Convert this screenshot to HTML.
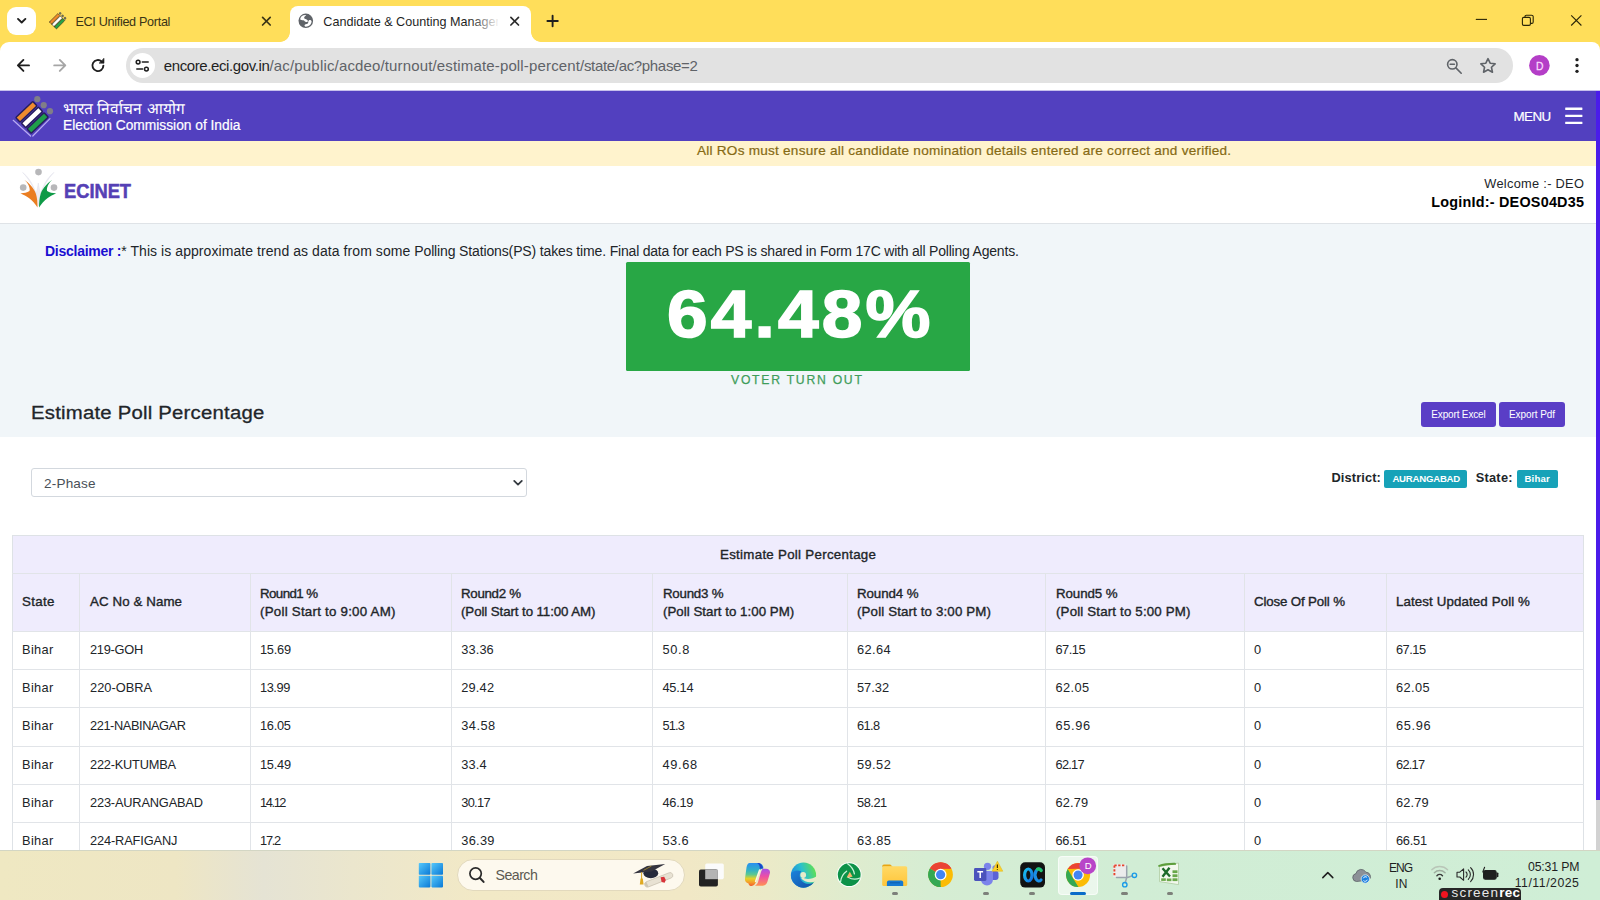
<!DOCTYPE html>
<html lang="en">
<head>
<meta charset="utf-8">
<title>Candidate &amp; Counting Management</title>
<style>
*{box-sizing:border-box;margin:0;padding:0}
html,body{width:1600px;height:900px;overflow:hidden;background:#fff;font-family:"Liberation Sans",sans-serif;color:#212529}
#root{position:relative;width:1600px;height:900px;overflow:hidden}
.a{position:absolute}
.t{position:absolute;white-space:nowrap}
svg{position:absolute;overflow:visible}
/* browser chrome */
#tabstrip{left:0;top:0;width:1600px;height:56px;background:#ffde5a}
#tabdrop{left:7px;top:7px;width:28.5px;height:27.8px;border-radius:9px;background:#fff}
#tab2{left:290.3px;top:6.1px;width:240.7px;height:36px;background:#fff;border-radius:8px 8px 0 0}
#tab2:before,#tab2:after{content:"";position:absolute;bottom:0;width:10px;height:10px}
#tab2:before{left:-10px;background:radial-gradient(circle at 0 0,rgba(255,255,255,0) 9.5px,#fff 10.2px)}
#tab2:after{right:-10px;background:radial-gradient(circle at 100% 0,rgba(255,255,255,0) 9.5px,#fff 10.2px)}
#toolbar{left:0;top:41.5px;width:1600px;height:48.5px;background:#fff;border-radius:9px 8px 0 0}
#omni{left:125.6px;top:48.1px;width:1387px;height:34.5px;border-radius:17.25px;background:#e2e2e2}
#sitebtn{left:130px;top:53px;width:25px;height:25px;border-radius:50%;background:#fff}
#chromeline{left:0;top:89.5px;width:1600px;height:1.5px;background:#c6c0ec}
#t2fade{left:470px;top:10px;width:30px;height:24px;background:linear-gradient(90deg,rgba(255,255,255,0),#fff)}
/* page */
#hdr{left:0;top:91px;width:1596px;height:50.4px;background:#5240bf}
#notice{left:0;top:141.4px;width:1596px;height:24.2px;background:#fff3cd}
#whitehdr{left:0;top:165.6px;width:1596px;height:58px;background:#fff;border-bottom:1px solid #dfe3e7}
#band{left:0;top:223.6px;width:1596px;height:213px;background:#f1f6f9}
#sbar{left:1596px;top:91px;width:4px;height:760px;background:#d2d2d2}
#sthumb{left:1596px;top:91px;width:4px;height:709px;background:#4a1cea}
#green{left:626px;top:262px;width:344px;height:108.5px;background:#28a745;border-radius:1.5px}
.btn{background:#5a3ec6;border-radius:3px;height:24.8px;top:401.8px}
.badge{background:#17a2b8;border-radius:2px;height:17.5px;top:470px}
#sel{left:31px;top:468.2px;width:495.8px;height:29px;border:1px solid #d3d8de;border-radius:3px;background:#fff}
/* table */
#tbl{left:12px;top:535px;width:1572px;height:316px;border:1px solid #dee2e6;border-bottom:0}
#thead{left:12.5px;top:535.5px;width:1571px;height:96px;background:#efecfd}
.hl{position:absolute;left:12px;width:1572px;height:1px;background:#e1e4e8}
.vl{position:absolute;top:573px;width:1px;height:278px;background:#e1e4e8}
.th{transform:scaleX(1.04);transform-origin:0 50%;font-weight:400;-webkit-text-stroke:0.35px #212529;font-size:12.8px;color:#212529}
.td{font-size:12.8px;color:#212529}
/* taskbar */
#taskbar{left:0;top:850.3px;width:1600px;height:50px;background:linear-gradient(90deg,#efe8c2 0%,#eee6c4 11%,#e5e3d4 16.500%,#ebe6cd 22%,#f2e9c6 30%,#f1e8c6 43%,#ebeac8 48%,#dfecce 53%,#d6edd3 58%,#d1edd5 70%,#cfeed6 100%);border-top:1px solid #d3d6c4}
#search{left:457px;top:858.6px;width:227.800px;height:32.600px;border-radius:16.300px;background:#fdf9ee;border:1px solid #e2d9bd}
#actv{left:1058.4px;top:855.6px;width:39.4px;height:39.4px;border-radius:4px;background:rgba(255,255,255,.55);border:1px solid rgba(255,255,255,.6)}
.dot{position:absolute;top:891.6px;width:6.4px;height:3px;border-radius:1.5px;background:#7d807a}
#srec{left:1439px;top:887.5px;width:82px;height:14px;border-radius:4px 4px 0 0;background:#262626}
</style>
</head>
<body>
<div id="root">
<!-- BROWSER CHROME -->
<div id="tabstrip" class="a"></div>
<div id="tabdrop" class="a"></div>
<div id="tab2" class="a"></div>
<div id="toolbar" class="a"></div>
<div id="omni" class="a"></div>
<div id="sitebtn" class="a"></div>
<div id="chromeline" class="a"></div>
<div class="t" style="top:14px;font-size:12.6px;line-height:17px;height:17px;left:75.40px;letter-spacing:-0.3px;color:#3a3416;">ECI Unified Portal</div>
<div class="t" style="top:14px;font-size:12.6px;line-height:17px;height:17px;left:323.30px;color:#1f1f1f;width:175px;overflow:hidden;">Candidate &amp; Counting Management</div>
<div id="t2fade" class="a"></div>
<div class="t" style="top:56px;font-size:15px;line-height:19px;height:19px;left:163.80px;color:#5f6368;"><span style="color:#1f1f1f;letter-spacing:-0.394px">encore.eci.gov.in</span><span style="letter-spacing:0.183px">/ac/public</span><span style="letter-spacing:0.143px">/acdeo/turnout</span><span style="letter-spacing:0.153px">/estimate-poll-percent</span><span style="letter-spacing:-0.330px">/state/ac?phase=2</span></div>
<svg class="a" style="left:0;top:0" width="1600" height="91" viewBox="0 0 1600 91" fill="none" stroke-linecap="round" stroke-linejoin="round">
<!-- tab dropdown chevron -->
<path d="M18 18.900 L21.700 22.500 L25.400 18.900" stroke="#1f1f1f" stroke-width="1.900"/>
<!-- ECI favicon -->
<g transform="translate(57.6 20.8) rotate(-45) scale(.88)">
<rect x="-7.5" y="-5.6" width="13.5" height="3.4" rx=".5" fill="#f08a2b" stroke="#3c2f1a" stroke-width=".7"/>
<rect x="-7.5" y="-1.7" width="13.5" height="3.4" rx=".5" fill="#fff" stroke="#3c2f1a" stroke-width=".7"/>
<rect x="-7.5" y="2.2" width="13.5" height="3.4" rx=".5" fill="#27a348" stroke="#3c2f1a" stroke-width=".7"/>
<circle cx="8" cy="-3.9" r="1.5" fill="#6e6a52"/><circle cx="8" cy="0" r="1.5" fill="#6e6a52"/><circle cx="8" cy="3.9" r="1.5" fill="#6e6a52"/>
</g>
<!-- tab close buttons -->
<path d="M262.6 17.4 l7.6 7.6 m0 -7.6 l-7.6 7.6" stroke="#3a3416" stroke-width="1.7"/>
<path d="M510.9 17.4 l7.6 7.6 m0 -7.6 l-7.6 7.6" stroke="#2b2b2b" stroke-width="1.7"/>
<!-- new tab plus -->
<path d="M547.4 21 h10.4 M552.6 15.8 v10.4" stroke="#1f1f1f" stroke-width="1.9"/>
<!-- globe favicon -->
<g transform="translate(305.8 20.8)"><circle r="7.3" fill="#5f6368"/>
<path d="M-5.7 -1.5 C-5.3 -4.6 -2.5 -6.1 .5 -5.7 C-.5 -4.6 -1.8 -4 -1.6 -2.8 C-1.4 -1.6 .8 -1.8 1.8 -.6 C2.6 .4 1.6 1.5 .4 1.3 C-1 1.100 -1.200 -.3 -2.600 -.5 C-3.800 -.7 -4.900 -.5 -5.700 -1.500Z" fill="#fff"/>
<path d="M5.800 .5 C5.600 3.900 3 6 -.2 5.900 C-1.300 5.800 -1.700 4.600 -.8 3.800 C0 3 1.600 3.400 2.200 2.400 C2.800 1.400 2 .4 3 -.4 C4 -1.200 5.300 -.6 5.800 .5Z" fill="#fff"/></g>
<!-- back -->
<path d="M29 65.4 H18.2 M23.4 59.9 L17.9 65.4 L23.4 70.9" stroke="#1f1f1f" stroke-width="1.9"/>
<!-- forward (disabled) -->
<path d="M54.2 65.4 H65 M59.8 59.9 L65.3 65.4 L59.8 70.9" stroke="#a6a6a6" stroke-width="1.9"/>
<!-- reload -->
<path d="M103.4 65.6 a5.5 5.5 0 1 1 -1.7 -4" stroke="#1f1f1f" stroke-width="1.9"/>
<path d="M104 58.6 v4.6 h-4.6z" fill="#1f1f1f" stroke="#1f1f1f" stroke-width=".6"/>
<!-- site settings (tune) -->
<g stroke="#1f1f1f" stroke-width="1.5">
<circle cx="138.1" cy="62.1" r="1.9"/><path d="M142.3 62.1 H148.2"/>
<path d="M136.8 69.1 H142.6"/><circle cx="146.4" cy="69.1" r="1.9"/>
</g>
<!-- zoom-out indicator -->
<g stroke="#5f6368" stroke-width="1.6">
<circle cx="1452.3" cy="64.3" r="4.7"/><path d="M1455.9 67.9 L1461.2 73.2"/><path d="M1450.2 64.3 h4.2"/>
</g>
<!-- bookmark star -->
<path d="M1488 58.6 l2.15 4.6 l5.0 .6 l-3.7 3.45 l1 4.95 l-4.45 -2.45 l-4.45 2.45 l1 -4.95 l-3.7 -3.45 l5.0 -.6z" stroke="#5f6368" stroke-width="1.6"/>
<!-- profile -->
<circle cx="1539.4" cy="65.4" r="10.3" fill="#b43ec7"/>
<!-- kebab -->
<g fill="#1f1f1f"><circle cx="1577" cy="59.700" r="1.650"/><circle cx="1577" cy="65.500" r="1.650"/><circle cx="1577" cy="71.300" r="1.650"/></g>
<!-- window controls -->
<g stroke="#2a2508" stroke-width="1.1" stroke-linecap="butt">
<path d="M1475.8 19.4 H1487"/>
<rect x="1522.4" y="17.4" width="8" height="8" rx="1.3"/>
<path d="M1525 17.2 v-.6 a1.4 1.4 0 0 1 1.4 -1.4 h5.2 a1.6 1.6 0 0 1 1.6 1.6 v5.2 a1.4 1.4 0 0 1 -1.4 1.4 h-.8"/>
<path d="M1571.2 15.3 L1581.4 25.5 M1581.4 15.3 L1571.2 25.5"/>
</g>
</svg>
<div class="t" style="top:58px;font-size:11.5px;line-height:16px;height:16px;left:1535.90px;color:#f9dcfc;-webkit-text-stroke:.3px #f9dcfc;transform:scaleX(.9);transform-origin:0 50%;">D</div>
<!-- PAGE HEADER -->
<div id="hdr" class="a"></div>
<div id="notice" class="a"></div>
<div id="whitehdr" class="a"></div>
<div id="band" class="a"></div>
<div id="sbar" class="a"></div>
<div id="sthumb" class="a"></div>
<svg class="a" style="left:0;top:91px" width="1596" height="140" viewBox="0 91 1596 140" fill="none">
<!-- ECI logo -->
<g stroke="#b9aaf2" stroke-width="1.2" stroke-linecap="round"><path d="M13.2 120.3 L30.6 136"/><path d="M32.8 136 L50 118.6"/></g>
<g transform="translate(32 117.4) rotate(-43.5)">
<rect x="-11.9" y="-11" width="23.4" height="6.1" rx=".8" fill="#ef8b2e" stroke="#261d5c" stroke-width="1.5"/>
<rect x="-11.7" y="-3.050" width="23.4" height="6.1" rx=".8" fill="#ffffff" stroke="#261d5c" stroke-width="1.5"/>
<rect x="-11.5" y="4.900" width="23.4" height="6.1" rx=".8" fill="#1f9e4a" stroke="#261d5c" stroke-width="1.5"/>
</g>
<circle cx="37.3" cy="99.2" r="3.1" fill="#807e88"/><circle cx="43.7" cy="105.2" r="3.1" fill="#807e88"/><circle cx="50" cy="111.2" r="3.1" fill="#807e88"/>
<!-- hamburger -->
<g fill="#fff"><rect x="1565.2" y="107.6" width="17.2" height="2.3" rx=".3"/><rect x="1565.2" y="114.8" width="17.2" height="2.3" rx=".3"/><rect x="1565.2" y="121.7" width="17.2" height="2.3" rx=".3"/></g>
<!-- ECINET logo -->
<path d="M38.3 206 C37.6 196 33 180 22.6 172.4 C29.5 179.5 33.4 187.5 36.2 193.5 C37.2 190 37.8 186 38.3 183 C38.8 186 39.4 190 40.4 193.5 C43.2 187.5 47.1 179.5 54 172.4 C43.6 180 39 196 38.3 206Z" fill="#ededf3" stroke="#e1e1ea" stroke-width=".5"/>
<path d="M24.4 180.1 C28.5 182.5 33.5 187.5 35.9 193.7 C37.2 198 37.6 203 37.5 207.6 C36 204.5 32 200.5 28.9 198 C26.5 196.3 23.6 194.8 20.4 193.2 C23 193.4 27 192.6 29.5 191 C30.3 189 29 186 27.9 184.1 C27 182.6 25.8 181.2 24.4 180.1Z" fill="#ea7e22"/>
<path d="M52.2 180.1 C48.1 182.5 43.1 187.5 40.7 193.7 C39.4 198 39 203 39.1 207.6 C40.6 204.5 44.6 200.5 47.7 198 C50.1 196.3 53 194.8 56.2 193.2 C53.6 193.4 49.6 192.6 47.1 191 C46.3 189 47.600 186 48.700 184.1 C49.600 182.600 50.800 181.200 52.200 180.100Z" fill="#0f9a47"/>
<circle cx="38.5" cy="172.1" r="3.3" fill="#b7b7b9"/><circle cx="23.2" cy="187.6" r="3.3" fill="#b7b7b9"/><circle cx="54" cy="187.6" r="3.3" fill="#b7b7b9"/>
</svg>
<div class="t" style="top:99px;font-size:15.5px;line-height:20px;height:20px;left:63.00px;color:#fff;font-family:"Liberation Sans","Noto Sans Devanagari","Lohit Devanagari",sans-serif;">भारत निर्वाचन आयोग</div>
<div class="t" style="top:117px;font-size:13.8px;line-height:18px;height:18px;left:63.00px;letter-spacing:-0.02px;color:#fff;-webkit-text-stroke:.2px #fff;">Election Commission of India</div>
<div class="t" style="top:108px;font-size:13.4px;line-height:18px;height:18px;left:1513.50px;letter-spacing:-0.58px;color:#fff;-webkit-text-stroke:.2px #fff;">MENU</div>
<div class="t" style="top:142px;font-size:12.8px;line-height:17px;height:17px;left:697.00px;letter-spacing:0.229px;color:#866a14;transform:scaleX(1.06);transform-origin:0 50%;-webkit-text-stroke:.2px #866a14;">All ROs must ensure all candidate nomination details entered are correct and verified.</div>
<div class="t" style="top:178px;font-size:21px;line-height:25px;height:25px;left:64.00px;font-weight:700;color:#5540b5;transform:scaleX(.87);transform-origin:0 50%;-webkit-text-stroke:.55px #5540b5;">ECINET</div>
<div class="t" style="top:175px;font-size:12.8px;line-height:17px;height:17px;right:15.80px;letter-spacing:0.3px;">Welcome :- DEO</div>
<div class="t" style="top:193px;font-size:14.4px;line-height:19px;height:19px;right:15.80px;font-weight:700;letter-spacing:0.225px;color:#000;">LoginId:- DEOS04D35</div>
<!-- SUMMARY BAND -->
<div class="t" style="top:242px;font-size:14px;line-height:18px;height:18px;left:45.00px;"><b style="color:#1a0fd1;letter-spacing:-0.264px">Disclaimer :</b><span style="letter-spacing:0.067px">* This is approximate trend as data from some </span><span style="letter-spacing:-0.136px">Polling Stations(PS) takes time. </span><span style="letter-spacing:-0.218px">Final data for each PS is </span><span style="letter-spacing:-0.205px">shared in Form 17C with all Polling Agents.</span></div>
<div id="green" class="a"></div>
<div class="t" style="top:279px;font-size:66.4px;line-height:71px;height:71px;left:666.50px;font-weight:700;letter-spacing:2.85px;color:#fff;transform:scaleX(1.1);transform-origin:0 50%;-webkit-text-stroke:1.6px #fff;">64.48%</div>
<div class="t" style="top:372px;font-size:12.2px;line-height:17px;height:17px;left:731.00px;letter-spacing:1.75px;color:#3f9d5b;-webkit-text-stroke:.25px #3f9d5b;">VOTER TURN OUT</div>
<div class="t" style="top:401px;font-size:19.2px;line-height:24px;height:24px;left:31.00px;letter-spacing:0.2px;transform:scaleX(1.06);transform-origin:0 50%;-webkit-text-stroke:.3px #212529;">Estimate Poll Percentage</div>
<div class="a btn" style="left:1421px;width:75px"></div>
<div class="a btn" style="left:1499px;width:66px"></div>
<div class="t" style="top:408px;font-size:10px;line-height:14px;height:14px;left:1431.30px;letter-spacing:-0.158px;color:#fff;">Export Excel</div>
<div class="t" style="top:408px;font-size:10px;line-height:14px;height:14px;left:1509.00px;letter-spacing:-0.077px;color:#fff;">Export Pdf</div>
<!-- FILTER ROW -->
<div id="sel" class="a"></div>
<div class="t" style="top:475px;font-size:12.8px;line-height:17px;height:17px;left:43.50px;letter-spacing:0.167px;color:#495057;transform:scaleX(1.06);transform-origin:0 50%;">2-Phase</div>
<svg class="a" style="left:512px;top:478px" width="12" height="10" viewBox="0 0 12 10" fill="none"><path d="M2.2 2.9 L6 6.6 L9.8 2.9" stroke="#343a40" stroke-width="1.8" stroke-linecap="round" stroke-linejoin="round"/></svg>
<div class="t" style="top:469px;font-size:12.8px;line-height:17px;height:17px;left:1331.50px;font-weight:700;letter-spacing:0.127px;">District:</div>
<div class="a badge" style="left:1384px;width:83.3px"></div>
<div class="t" style="top:472px;font-size:9.6px;line-height:14px;height:14px;left:1392.40px;font-weight:700;letter-spacing:-0.22px;color:#fff;">AURANGABAD</div>
<div class="t" style="top:469px;font-size:12.8px;line-height:17px;height:17px;left:1475.70px;font-weight:700;letter-spacing:0.256px;">State:</div>
<div class="a badge" style="left:1517px;width:40.5px"></div>
<div class="t" style="top:472px;font-size:9.6px;line-height:14px;height:14px;left:1524.40px;font-weight:700;letter-spacing:0.214px;color:#fff;">Bihar</div>
<!-- TABLE -->
<div id="thead" class="a"></div>
<div id="tbl" class="a"></div>
<div class="vl" style="left:79.00px"></div>
<div class="vl" style="left:250.00px"></div>
<div class="vl" style="left:451.25px"></div>
<div class="vl" style="left:652.00px"></div>
<div class="vl" style="left:846.50px"></div>
<div class="vl" style="left:1044.50px"></div>
<div class="vl" style="left:1243.50px"></div>
<div class="vl" style="left:1385.50px"></div>
<div class="hl" style="top:572.50px"></div>
<div class="hl" style="top:630.75px"></div>
<div class="hl" style="top:669.00px"></div>
<div class="hl" style="top:707.25px"></div>
<div class="hl" style="top:745.50px"></div>
<div class="hl" style="top:783.75px"></div>
<div class="hl" style="top:822.00px"></div>
<div class="t th" style="top:546px;font-size:12.8px;line-height:17px;height:17px;left:720.00px;letter-spacing:0.273px;">Estimate Poll Percentage</div>
<div class="t th" style="top:593px;font-size:12.8px;line-height:17px;height:17px;left:22.00px;letter-spacing:0.341px;">State</div>
<div class="t th" style="top:593px;font-size:12.8px;line-height:17px;height:17px;left:90.00px;letter-spacing:0.088px;">AC No &amp; Name</div>
<div class="t th" style="top:585px;font-size:12.8px;line-height:17px;height:17px;left:260.00px;letter-spacing:-0.572px;">Round1 %</div>
<div class="t th" style="top:603px;font-size:12.8px;line-height:17px;height:17px;left:260.00px;letter-spacing:0.232px;">(Poll Start to 9:00 AM)</div>
<div class="t th" style="top:585px;font-size:12.8px;line-height:17px;height:17px;left:461.25px;letter-spacing:-0.298px;">Round2 %</div>
<div class="t th" style="top:603px;font-size:12.8px;line-height:17px;height:17px;left:461.25px;letter-spacing:-0.088px;">(Poll Start to 11:00 AM)</div>
<div class="t th" style="top:585px;font-size:12.8px;line-height:17px;height:17px;left:662.50px;letter-spacing:-0.229px;">Round3 %</div>
<div class="t th" style="top:603px;font-size:12.8px;line-height:17px;height:17px;left:662.50px;letter-spacing:0.013px;">(Poll Start to 1:00 PM)</div>
<div class="t th" style="top:585px;font-size:12.8px;line-height:17px;height:17px;left:857.00px;letter-spacing:-0.091px;">Round4 %</div>
<div class="t th" style="top:603px;font-size:12.8px;line-height:17px;height:17px;left:857.00px;letter-spacing:0.133px;">(Poll Start to 3:00 PM)</div>
<div class="t th" style="top:585px;font-size:12.8px;line-height:17px;height:17px;left:1055.50px;letter-spacing:-0.091px;">Round5 %</div>
<div class="t th" style="top:603px;font-size:12.8px;line-height:17px;height:17px;left:1055.50px;letter-spacing:0.155px;">(Poll Start to 5:00 PM)</div>
<div class="t th" style="top:593px;font-size:12.8px;line-height:17px;height:17px;left:1254.00px;letter-spacing:-0.152px;">Close Of Poll %</div>
<div class="t th" style="top:593px;font-size:12.8px;line-height:17px;height:17px;left:1396.00px;letter-spacing:0.109px;">Latest Updated Poll %</div>
<div class="t td" style="top:641px;font-size:12.8px;line-height:17px;height:17px;left:22.00px;letter-spacing:0.342px;">Bihar</div>
<div class="t td" style="top:641px;font-size:12.8px;line-height:17px;height:17px;left:90.00px;letter-spacing:-0.254px;">219-GOH</div>
<div class="t td" style="top:641px;font-size:12.8px;line-height:17px;height:17px;left:260.00px;letter-spacing:-0.245px;">15.69</div>
<div class="t td" style="top:641px;font-size:12.8px;line-height:17px;height:17px;left:461.25px;letter-spacing:0.117px;">33.36</div>
<div class="t td" style="top:641px;font-size:12.8px;line-height:17px;height:17px;left:662.50px;letter-spacing:0.612px;">50.8</div>
<div class="t td" style="top:641px;font-size:12.8px;line-height:17px;height:17px;left:857.00px;letter-spacing:0.417px;">62.64</div>
<div class="t td" style="top:641px;font-size:12.8px;line-height:17px;height:17px;left:1055.50px;letter-spacing:-0.495px;">67.15</div>
<div class="t td" style="top:641px;font-size:12.8px;line-height:17px;height:17px;left:1254.00px;">0</div>
<div class="t td" style="top:641px;font-size:12.8px;line-height:17px;height:17px;left:1396.00px;letter-spacing:-0.495px;">67.15</div>
<div class="t td" style="top:679px;font-size:12.8px;line-height:17px;height:17px;left:22.00px;letter-spacing:0.342px;">Bihar</div>
<div class="t td" style="top:679px;font-size:12.8px;line-height:17px;height:17px;left:90.00px;letter-spacing:0.015px;">220-OBRA</div>
<div class="t td" style="top:679px;font-size:12.8px;line-height:17px;height:17px;left:260.00px;letter-spacing:-0.433px;">13.99</div>
<div class="t td" style="top:679px;font-size:12.8px;line-height:17px;height:17px;left:461.25px;letter-spacing:0.192px;">29.42</div>
<div class="t td" style="top:679px;font-size:12.8px;line-height:17px;height:17px;left:662.50px;letter-spacing:-0.245px;">45.14</div>
<div class="t td" style="top:679px;font-size:12.8px;line-height:17px;height:17px;left:857.00px;letter-spacing:0.005px;">57.32</div>
<div class="t td" style="top:679px;font-size:12.8px;line-height:17px;height:17px;left:1055.50px;letter-spacing:0.417px;">62.05</div>
<div class="t td" style="top:679px;font-size:12.8px;line-height:17px;height:17px;left:1254.00px;">0</div>
<div class="t td" style="top:679px;font-size:12.8px;line-height:17px;height:17px;left:1396.00px;letter-spacing:0.417px;">62.05</div>
<div class="t td" style="top:717px;font-size:12.8px;line-height:17px;height:17px;left:22.00px;letter-spacing:0.342px;">Bihar</div>
<div class="t td" style="top:717px;font-size:12.8px;line-height:17px;height:17px;left:90.00px;letter-spacing:-0.418px;">221-NABINAGAR</div>
<div class="t td" style="top:717px;font-size:12.8px;line-height:17px;height:17px;left:260.00px;letter-spacing:-0.258px;">16.05</div>
<div class="t td" style="top:717px;font-size:12.8px;line-height:17px;height:17px;left:461.25px;letter-spacing:0.492px;">34.58</div>
<div class="t td" style="top:717px;font-size:12.8px;line-height:17px;height:17px;left:662.50px;letter-spacing:-0.821px;">51.3</div>
<div class="t td" style="top:717px;font-size:12.8px;line-height:17px;height:17px;left:857.00px;letter-spacing:-0.588px;">61.8</div>
<div class="t td" style="top:717px;font-size:12.8px;line-height:17px;height:17px;left:1055.50px;letter-spacing:0.655px;">65.96</div>
<div class="t td" style="top:717px;font-size:12.8px;line-height:17px;height:17px;left:1254.00px;">0</div>
<div class="t td" style="top:717px;font-size:12.8px;line-height:17px;height:17px;left:1396.00px;letter-spacing:0.655px;">65.96</div>
<div class="t td" style="top:756px;font-size:12.8px;line-height:17px;height:17px;left:22.00px;letter-spacing:0.342px;">Bihar</div>
<div class="t td" style="top:756px;font-size:12.8px;line-height:17px;height:17px;left:90.00px;letter-spacing:-0.22px;">222-KUTUMBA</div>
<div class="t td" style="top:756px;font-size:12.8px;line-height:17px;height:17px;left:260.00px;letter-spacing:-0.245px;">15.49</div>
<div class="t td" style="top:756px;font-size:12.8px;line-height:17px;height:17px;left:461.25px;letter-spacing:0.129px;">33.4</div>
<div class="t td" style="top:756px;font-size:12.8px;line-height:17px;height:17px;left:662.50px;letter-spacing:0.655px;">49.68</div>
<div class="t td" style="top:756px;font-size:12.8px;line-height:17px;height:17px;left:857.00px;letter-spacing:0.442px;">59.52</div>
<div class="t td" style="top:756px;font-size:12.8px;line-height:17px;height:17px;left:1055.50px;letter-spacing:-0.733px;">62.17</div>
<div class="t td" style="top:756px;font-size:12.8px;line-height:17px;height:17px;left:1254.00px;">0</div>
<div class="t td" style="top:756px;font-size:12.8px;line-height:17px;height:17px;left:1396.00px;letter-spacing:-0.733px;">62.17</div>
<div class="t td" style="top:794px;font-size:12.8px;line-height:17px;height:17px;left:22.00px;letter-spacing:0.342px;">Bihar</div>
<div class="t td" style="top:794px;font-size:12.8px;line-height:17px;height:17px;left:90.00px;letter-spacing:-0.172px;">223-AURANGABAD</div>
<div class="t td" style="top:794px;font-size:12.8px;line-height:17px;height:17px;left:260.00px;letter-spacing:-1.383px;">14.12</div>
<div class="t td" style="top:794px;font-size:12.8px;line-height:17px;height:17px;left:461.25px;letter-spacing:-0.695px;">30.17</div>
<div class="t td" style="top:794px;font-size:12.8px;line-height:17px;height:17px;left:662.50px;letter-spacing:-0.258px;">46.19</div>
<div class="t td" style="top:794px;font-size:12.8px;line-height:17px;height:17px;left:857.00px;letter-spacing:-0.458px;">58.21</div>
<div class="t td" style="top:794px;font-size:12.8px;line-height:17px;height:17px;left:1055.50px;letter-spacing:0.167px;">62.79</div>
<div class="t td" style="top:794px;font-size:12.8px;line-height:17px;height:17px;left:1254.00px;">0</div>
<div class="t td" style="top:794px;font-size:12.8px;line-height:17px;height:17px;left:1396.00px;letter-spacing:0.167px;">62.79</div>
<div class="t td" style="top:832px;font-size:12.8px;line-height:17px;height:17px;left:22.00px;letter-spacing:0.342px;">Bihar</div>
<div class="t td" style="top:832px;font-size:12.8px;line-height:17px;height:17px;left:90.00px;letter-spacing:-0.128px;">224-RAFIGANJ</div>
<div class="t td" style="top:832px;font-size:12.8px;line-height:17px;height:17px;left:260.00px;letter-spacing:-1.238px;">17.2</div>
<div class="t td" style="top:832px;font-size:12.8px;line-height:17px;height:17px;left:461.25px;letter-spacing:0.292px;">36.39</div>
<div class="t td" style="top:832px;font-size:12.8px;line-height:17px;height:17px;left:662.50px;letter-spacing:0.379px;">53.6</div>
<div class="t td" style="top:832px;font-size:12.8px;line-height:17px;height:17px;left:857.00px;letter-spacing:0.492px;">63.85</div>
<div class="t td" style="top:832px;font-size:12.8px;line-height:17px;height:17px;left:1055.50px;letter-spacing:-0.245px;">66.51</div>
<div class="t td" style="top:832px;font-size:12.8px;line-height:17px;height:17px;left:1254.00px;">0</div>
<div class="t td" style="top:832px;font-size:12.8px;line-height:17px;height:17px;left:1396.00px;letter-spacing:-0.245px;">66.51</div>
<!-- TASKBAR -->
<div id="taskbar" class="a"></div>
<div id="search" class="a"></div>
<div id="actv" class="a"></div>
<div class="dot" style="left:892.0px"></div>
<div class="dot" style="left:983.0px"></div>
<div class="dot" style="left:1029.0px"></div>
<div class="dot" style="left:1121.2px"></div>
<div class="dot" style="left:1167.0px"></div>
<div class="a" style="left:1070px;top:891.8px;width:16.2px;height:3px;border-radius:1.5px;background:#0a6cc9"></div>
<svg class="a" style="left:0;top:851px" width="1600" height="49" viewBox="0 851 1600 49" fill="none">
<defs>
<linearGradient id="gw" x1="0" y1="0" x2="1" y2="1"><stop offset="0" stop-color="#55c8fb"/><stop offset="1" stop-color="#0a79d6"/></linearGradient>
<linearGradient id="gcl" x1="0" y1="0" x2="0" y2="1"><stop offset="0" stop-color="#2a8ff0"/><stop offset=".3" stop-color="#30b0c8"/><stop offset=".5" stop-color="#5cc890"/><stop offset=".68" stop-color="#e6d228"/><stop offset=".85" stop-color="#f59a2c"/><stop offset="1" stop-color="#f25a2c"/></linearGradient>
<linearGradient id="gcr" x1="0" y1="0" x2="0" y2="1"><stop offset="0" stop-color="#a850e8"/><stop offset=".45" stop-color="#ee4fa4"/><stop offset="1" stop-color="#ff9252"/></linearGradient>
<linearGradient id="ged" x1="0" y1=".6" x2="1" y2=".25"><stop offset="0" stop-color="#1a86e0"/><stop offset=".5" stop-color="#2cc0cc"/><stop offset="1" stop-color="#62e24a"/></linearGradient><linearGradient id="ged2" x1="0" y1="0" x2="1" y2="1"><stop offset="0" stop-color="#1b84dc"/><stop offset="1" stop-color="#134fa6"/></linearGradient>
<linearGradient id="gfo" x1="0" y1="0" x2="0" y2="1"><stop offset="0" stop-color="#ffd964"/><stop offset="1" stop-color="#ffc53a"/></linearGradient>
<linearGradient id="gwx" x1="0" y1="0" x2="1" y2="1"><stop offset="0" stop-color="#19c0f0"/><stop offset="1" stop-color="#1570e0"/></linearGradient>
</defs>
<!-- start -->
<g fill="url(#gw)"><rect x="418.8" y="863" width="11.6" height="11.7" rx=".8"/><rect x="431.4" y="863" width="11.6" height="11.7" rx=".8"/><rect x="418.8" y="875.7" width="11.6" height="11.7" rx=".8"/><rect x="431.4" y="875.7" width="11.6" height="11.7" rx=".8"/></g>
<!-- search magnifier -->
<circle cx="475.6" cy="873.6" r="5.7" stroke="#2a2a2a" stroke-width="1.7"/><path d="M479.9 878 L483.6 881.9" stroke="#2a2a2a" stroke-width="2" stroke-linecap="round"/>
<!-- graduation cap + scroll -->
<path d="M646.400 881.700 l22.600 -8.900 a2.800 2.800 0 0 1 2.100 5.200 l-22.600 8.900 a2.800 2.800 0 0 1 -2.100 -5.200z" fill="#e8e2d3" stroke="#bdb5a2" stroke-width=".6"/>
<path d="M647 887 a2.800 2.800 0 0 1 -.6 -5.300 l2.200 5.200z" fill="#cfc7b3"/>
<path d="M660.600 877.300 l3.600 -.6 l1.600 3.400 l-1.200 2.600 l-3 -.8z" fill="#d8343a"/>
<ellipse cx="650.800" cy="873.300" rx="7.400" ry="4.900" fill="#252a3b"/>
<path d="M633.100 873.400 L647 866 L665.200 864 L651.500 871.600z" fill="#34343f"/>
<path d="M643.500 870.400 l8 -4.400" stroke="#b99a2a" stroke-width=".7"/>
<path d="M641.600 872.300 v7" stroke="#d9a520" stroke-width="1"/><path d="M640.600 878.600 h2.200 l.8 5.800 h-3.800z" fill="#e0aa22"/>
<!-- task view -->
<rect x="705.2" y="863.4" width="18.6" height="15.8" rx="1.6" fill="#fbfbfb"/>
<rect x="699" y="869.6" width="18.9" height="16.9" rx="1.8" fill="#222"/>
<rect x="705.2" y="869.6" width="12.7" height="9.6" fill="#b4b4b4"/>
<!-- copilot -->
<path d="M749.800 863 h8.200 c3.400 0 5.600 2.400 5.400 5.600 c-2.400 .2 -3.800 1.600 -4.500 3.800 l-2.500 8.600 c-.5 1.800 -1.500 3.400 -3.300 4.600 c-1.800 1 -4.200 .2 -4.600 -2.200 c-2.400 -.4 -3.900 -2.200 -3.500 -4.800 l1.500 -11 c.4 -2.800 1.500 -4.600 3.300 -4.600z" fill="url(#gcl)"/>
<path d="M759.700 868.800 c.3 -2.600 -.6 -4.800 -2.600 -5.800 c3.200 -.2 5.600 1.800 5.900 5.500z" fill="#1c46c8"/>
<path d="M762.600 868.800 h3.400 c3 0 4.600 2 3.800 4.800 l-2.400 8.200 c-.8 2.600 -2.600 4 -5.200 4 h-7.400 c1.800 -.8 2.800 -2.200 3.400 -4.200 l2.400 -8.400 c.5 -2 1.600 -3.400 2 -4.400z" fill="url(#gcr)"/>
<path d="M759.600 870 L755.600 881.400" stroke="#fff6e6" stroke-width="1.500" stroke-linecap="round"/>
<!-- edge -->
<circle cx="803.500" cy="875.200" r="12.600" fill="url(#ged)"/>
<path d="M791 874 A12.600 12.600 0 0 0 813.800 882.400 C809 885.200 802 884 800 877.800 C799.300 875.400 799.800 873 801.200 871.200 C797 869.600 792.200 870.800 791 874Z" fill="url(#ged2)"/>
<circle cx="803.200" cy="875" r="2.900" fill="#e7ebca"/>
<path d="M802.600 877.600 C806 879.600 811.500 879.600 817.500 876 L816.500 881 C811 883.400 804.500 882.400 801.200 878.600Z" fill="#e7ebca"/>
<!-- green aperture app -->
<circle cx="849.2" cy="874.7" r="12.4" fill="#fbfffb"/><circle cx="849.2" cy="874.7" r="11.4" fill="#0c9248"/>
<g stroke="#c9f3d6" stroke-width="1.3" stroke-linecap="round"><path d="M847.6 863.8 c3 2 6 6 6.8 10"/><path d="M860 878 c-3.600 1.600 -8.600 1.200 -12 -.8"/><path d="M840.6 881.600 c.4 -3.800 2.600 -8 6 -10.400"/></g>
<path d="M846.600 877.400 l3.200 -5.600 l2.800 5z" fill="#f7b36a"/>
<!-- file explorer -->
<path d="M882.200 866.200 a1.800 1.800 0 0 1 1.800 -1.800 h6.200 l2.600 2.400 h-10.600z" fill="#e9a513"/>
<rect x="882.200" y="866.200" width="25" height="19.800" rx="1.600" fill="url(#gfo)"/>
<path d="M886.900 886 v-3.600 a2 2 0 0 1 2 -2 h12.300 a2 2 0 0 1 2 2 v3.600z" fill="#1579d3"/>
<path d="M890 882.800 h10" stroke="#0f5fae" stroke-width="1"/>
<!-- chrome -->
<g transform="translate(940.600 874.700)">
<circle r="12.300" fill="#fbbc05"/>
<path d="M0 0 L-10.650 -6.150 A12.300 12.300 0 0 1 10.650 -6.150z" fill="#ea4335"/>
<path d="M0 0 L-10.650 -6.150 A12.300 12.300 0 0 0 0 12.300z" fill="#34a853"/>
<path d="M0 -6 H11 L5 6z" fill="#fbbc05"/><path d="M0 -6.200 L10.700 -6.150 A12.300 12.300 0 0 0 -10.650 -6.150z" fill="#ea4335"/>
<path d="M-5.300 3.100 L0.300 12.300 A12.300 12.300 0 0 1 -10.650 -6.150z" fill="#34a853"/>
<circle r="5.900" fill="#fff"/><circle r="4.600" fill="#4285f4"/>
</g>
<!-- teams -->
<circle cx="995" cy="867.800" r="2.600" fill="#7b83eb"/><rect x="990.500" y="871" width="8" height="9" rx="2.400" fill="#5b62d6"/>
<circle cx="987.500" cy="866.300" r="3.600" fill="#7b83eb"/><path d="M981 871 h12 v8.500 a6 6 0 0 1 -12 0z" fill="#7b83eb"/>
<rect x="974" y="868" width="12.400" height="12.900" rx="1.400" fill="#4b53bc"/>
<path d="M977.300 871.800 h5.800 M980.200 871.800 v6.200" stroke="#fff" stroke-width="1.500"/>
<path d="M997.400 861.200 l5.400 10 h-10.800z" fill="#fcd12a" stroke="#e0b30f" stroke-width=".5" stroke-linejoin="round"/><path d="M997.400 864.600 v3.400 M997.400 869.200 v.9" stroke="#3b2f00" stroke-width="1.200"/>
<!-- webex -->
<rect x="1020.200" y="862.300" width="24.800" height="25.300" rx="5" fill="#121212"/>
<ellipse cx="1028.300" cy="875" rx="3.700" ry="6" stroke="url(#gwx)" stroke-width="3.200"/>
<path d="M1041 870 a3.800 6 0 1 0 0 10" stroke="#1a8fe8" stroke-width="3.200" stroke-linecap="round"/>
<path d="M1037.600 869.100 a3.800 6 0 0 1 3.500 1.500" stroke="#21c46a" stroke-width="3.200" stroke-linecap="round"/>
<!-- chrome (active, with profile badge) -->
<g transform="translate(1078.100 875)">
<circle r="12" fill="#fbbc05"/>
<path d="M0 -6.200 L10.400 -6 A12 12 0 0 0 -10.390 -6z" fill="#ea4335"/>
<path d="M-5.200 3.100 L0.300 12 A12 12 0 0 1 -10.390 -6z" fill="#34a853"/>
<circle r="5.800" fill="#fff"/><circle r="4.500" fill="#4285f4"/>
</g>
<circle cx="1087.700" cy="865.800" r="8.400" fill="#b845c8"/>
<!-- snipping tool -->
<rect x="1113.200" y="864.200" width="13" height="13" fill="#ececec"/>
<path d="M1114.400 865.400 h10.600 M1114.400 865.400 v10.600" stroke="#e5452c" stroke-width="1.900" stroke-dasharray="2.300 1.500"/>
<path d="M1126.700 866 v11.500 l-1.400 5 M1116.500 877.400 h11 l5 -1.600" stroke="#9aa3ad" stroke-width="1.500" stroke-linecap="round"/>
<circle cx="1134.400" cy="875.300" r="2.200" stroke="#1b9be8" stroke-width="1.400"/><circle cx="1124.800" cy="884.700" r="2.200" stroke="#1b9be8" stroke-width="1.400"/>
<!-- excel -->
<path d="M1159.500 866.500 l19 -3.500 v21.600 l-19 -3z" fill="#f3f8ee" stroke="#a9c79a" stroke-width=".7"/>
<path d="M1158.200 865.300 c5 -2 12 -2.600 17.500 -2.400 l.4 1.800 c-6 0 -12 .8 -17.500 2.400z" fill="#5e9e3c"/>
<g fill="#6aa84a"><rect x="1172.500" y="870.300" width="5" height="2.800"/><rect x="1172.500" y="874.300" width="5" height="2.800"/><rect x="1172.500" y="878.300" width="5" height="2.800"/><rect x="1161.200" y="878.300" width="4.600" height="2.600"/><rect x="1166.800" y="878.500" width="4.600" height="2.700"/></g>
<path d="M1162.500 868.300 l7.500 8.200 M1169.500 867.800 l-7 9" stroke="#1d6b2a" stroke-width="2.400"/>
<!-- tray chevron -->
<path d="M1322.800 877.600 L1327.800 872.600 L1332.800 877.600" stroke="#1f1f1f" stroke-width="1.500" stroke-linecap="round" stroke-linejoin="round"/>
<!-- onedrive cloud + sync -->
<path d="M1356.500 881.500 a4 4 0 0 1 -.6 -7.900 a5.400 5.400 0 0 1 10 -1.400 a4.400 4.400 0 0 1 2.800 7.900z" fill="#8c9097" stroke="#5b5f66" stroke-width=".8"/>
<circle cx="1365.300" cy="879" r="4.200" fill="#1a7fe0" stroke="#e9f4ee" stroke-width=".8"/>
<path d="M1363.300 878.300 a2.200 2.200 0 0 1 3.800 -.8 M1367.300 879.700 a2.200 2.200 0 0 1 -3.800 .8" stroke="#fff" stroke-width=".9"/>
<!-- wifi -->
<g stroke-linecap="round"><path d="M1431.800 869.800 a11.200 11.200 0 0 1 15.800 0" stroke="#b9c6b8" stroke-width="1.400"/><path d="M1434.300 872.800 a7.600 7.600 0 0 1 10.800 0" stroke="#9fae9f" stroke-width="1.400"/><path d="M1436.900 875.700 a4 4 0 0 1 5.600 0" stroke="#3a3a3a" stroke-width="1.400"/></g>
<circle cx="1439.700" cy="878.700" r="1.300" fill="#1f1f1f"/>
<!-- volume -->
<path d="M1457 872.200 h2.800 l3.800 -3.300 v11.400 l-3.800 -3.300 h-2.800z" stroke="#2a2a2a" stroke-width="1.100" stroke-linejoin="round"/>
<g stroke="#2a2a2a" stroke-width="1.100" stroke-linecap="round"><path d="M1466 872 a3.600 3.600 0 0 1 0 5.200"/><path d="M1468.300 869.800 a6.600 6.600 0 0 1 0 9.600"/><path d="M1470.600 867.600 a9.800 9.800 0 0 1 0 14"/></g>
<!-- battery -->
<rect x="1483.600" y="870.600" width="12.600" height="8.600" rx="1.800" fill="#1f1f1f" stroke="#1f1f1f" stroke-width="1.100"/><path d="M1497.600 873.300 v3.200" stroke="#1f1f1f" stroke-width="1.600" stroke-linecap="round"/>
<path d="M1484.600 867.300 l-1.800 4.600 h2.200 l-1.200 4" stroke="#1f1f1f" stroke-width="1.100" stroke-linejoin="round" stroke-linecap="round"/>
</svg>
<div class="t" style="top:866px;font-size:14.2px;line-height:19px;height:19px;left:495.60px;letter-spacing:-0.55px;color:#5c5a52;">Search</div>
<div class="t" style="top:859px;font-size:9.6px;line-height:14px;height:14px;left:1084.80px;color:#fff;">D</div>
<div class="t" style="top:860px;font-size:12px;line-height:16px;height:16px;left:1389.00px;letter-spacing:-1.0px;color:#1f1f1f;">ENG</div>
<div class="t" style="top:876px;font-size:12px;line-height:16px;height:16px;left:1395.30px;letter-spacing:0.2px;color:#1f1f1f;">IN</div>
<div class="t" style="top:859px;font-size:12.3px;line-height:17px;height:17px;right:20.60px;letter-spacing:-0.15px;color:#1f1f1f;">05:31 PM</div>
<div class="t" style="top:875px;font-size:12.3px;line-height:17px;height:17px;right:20.60px;letter-spacing:0.5px;color:#1f1f1f;">11/11/2025</div>
<div id="srec" class="a"></div>
<div class="a" style="left:1441.300px;top:890.500px;width:7px;height:7px;border-radius:50%;background:#f01420"></div>
<div class="t" style="top:884px;font-size:13.5px;line-height:18px;height:18px;left:1451.50px;letter-spacing:1.2px;color:#e8e8e8;">screen<b style="color:#fff;letter-spacing:0.3px">rec</b></div>
</div>
</body>
</html>
